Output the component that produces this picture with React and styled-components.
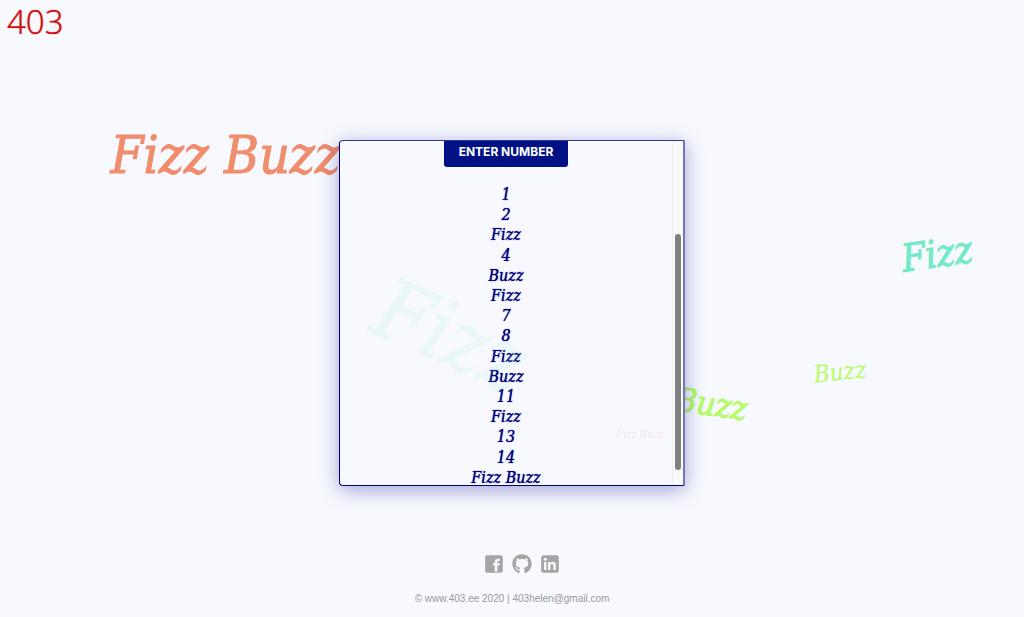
import React from "react";
import styled, { createGlobalStyle } from "styled-components";
import { FaGithub } from "react-icons/fa";

const GlobalStyle = createGlobalStyle`
  * { box-sizing: border-box; }
  body {
    margin: 0;
    background: #f7f9fe;
    font-family: "Liberation Sans", Arial, sans-serif;
  }
`;

const serif = `"DejaVu Serif Condensed", "DejaVu Serif", serif`;

const Page = styled.div`
  position: relative;
  display: flex;
  flex-direction: column;
  min-height: 100vh;
  overflow: hidden;
`;

const Header = styled.header`
  min-height: 72px;
  padding: 0 7px;
`;

const Logo = styled.a`
  color: #d0100f;
  font: 300 33px/44px "Open Sans", "Noto Sans", sans-serif;
  text-decoration: none;
  text-shadow: 0 0 1px #d0100f;
`;

const Main = styled.main`
  flex: 1;
  display: flex;
  align-items: center;
  justify-content: center;
`;

const Word = styled.span`
  position: absolute;
  left: ${(p) => p.$x}%;
  top: ${(p) => p.$y}%;
  z-index: ${(p) => (p.$front ? 2 : 0)};
  color: ${(p) => p.$color};
  opacity: ${(p) => p.$opacity || 1};
  font: italic 400 ${(p) => p.$size}px/1 ${serif};
  -webkit-text-stroke: ${(p) => (p.$size > 30 ? 1 : 0)}px ${(p) => p.$color};
  white-space: nowrap;
  transform: translate(-50%, -50%) rotate(${(p) => p.$turn || 0}deg);
  pointer-events: none;
`;

const Card = styled.section`
  position: relative;
  z-index: 1;
  display: flex;
  width: 346px;
  height: 346px;
  overflow: hidden;
  border: solid;
  border-width: 1px 2px 1px 1px;
  border-color: #33378f #7377b6 #00007c #00007c;
  border-radius: 4px 0 0 4px;
  background: #f7f9fe;
  box-shadow: 0 4px 20px rgba(0, 0, 140, 0.35);
`;

const Content = styled.div`
  flex: 1;
  display: flex;
  flex-direction: column;
  align-items: center;
  gap: 18px;
  margin-top: -4px;
`;

const EnterButton = styled.button`
  flex: none;
  height: 30px;
  padding: 0 15px;
  border: 0;
  border-radius: 3px;
  background: #001185;
  color: #fff;
  font: 700 12px/30px Inter, sans-serif;
  cursor: pointer;
`;

const Results = styled.ol`
  flex: none;
  display: grid;
  grid-auto-rows: 1fr;
  align-items: center;
  height: 303px;
  margin: 0;
  padding: 0;
  list-style: none;
  color: #00007c;
  font: italic 400 16px/20px ${serif};
  text-align: center;
  text-shadow: 0 0 1px #00007c;
`;

const Track = styled.div`
  display: flex;
  flex-direction: column;
  align-items: center;
  width: 11px;
  padding: 93px 0 15px;
  border-left: 1px solid #ededf0;
  background: #fafafa;
`;

const Thumb = styled.div`
  flex: 1;
  width: 6px;
  border-radius: 3px;
  background: #7d7f80;
`;

const Footer = styled.footer`
  display: flex;
  flex-direction: column;
  align-items: center;
  gap: 17px;
  padding-bottom: 10px;
  color: #999;
  font-size: 10px;
  line-height: 16px;
`;

const Social = styled.nav`
  display: flex;
  gap: 8px;
  padding-left: 20px;
`;

const SocialLink = styled.a`
  display: flex;
  color: #a5a5a5;
  font-size: 20px;
`;

const Copyright = styled.p`
  margin: 0;
`;

const MailLink = styled.a`
  color: inherit;
  text-decoration: none;
`;

const FacebookIcon = () => (
  <svg width="20" height="20" viewBox="0 0 20 20" aria-hidden="true">
    <rect x="1.2" y="1.2" width="17.6" height="17.6" rx="2.4" fill="currentColor" />
    <path
      fill="#f7f9fe"
      d="M10.7 17.4v-5.8H8.9V9.3h1.8V7.9c0-2 1.1-3.2 3.1-3.2h2v2.4h-1.3c-.9 0-1.1.4-1.1 1.1v1.1h2.4l-.3 2.3h-2.1v5.8z"
    />
  </svg>
);

const LinkedInIcon = () => (
  <svg width="20" height="20" viewBox="0 0 20 20" aria-hidden="true">
    <rect x="1.2" y="1.2" width="17.6" height="17.6" rx="2.4" fill="currentColor" />
    <circle cx="5.3" cy="5.3" r="1.5" fill="#f7f9fe" />
    <path
      fill="#f7f9fe"
      d="M4.1 8h2.4v8H4.1zM8 8h2.3v1.1c.5-.8 1.4-1.3 2.5-1.3 2.3 0 3 1.4 3 3.6V16h-2.4v-4.1c0-1.1-.2-2-1.4-2s-1.6.9-1.6 2V16H8z"
    />
  </svg>
);

const words = [
  { text: "Fizz Buzz", x: 22, y: 24.9, size: 53, color: "#f08d6d" },
  { text: "Fizz", x: 91.5, y: 41.1, size: 38, color: "#75e9c7", turn: -8 },
  { text: "Buzz", x: 82, y: 60.3, size: 24, color: "#b6fb68", turn: -6 },
  { text: "Buzz", x: 69.4, y: 65.4, size: 33, color: "#b6fb68", turn: 8 },
  { text: "Fizz", x: 44, y: 54.4, size: 84, color: "#75e9c7", turn: 24, opacity: 0.1, front: true },
  { text: "Fizz Buzz", x: 62.5, y: 70.3, size: 11, color: "#ff8d8d", opacity: 0.2, front: true },
];

const answer = (n) =>
  [n % 3 === 0 && "Fizz", n % 5 === 0 && "Buzz"].filter(Boolean).join(" ") || n;

export default function App() {
  return (
    <Page>
      <GlobalStyle />
      <Header>
        <Logo href="#">403</Logo>
      </Header>
      {words.map((w, i) => (
        <Word
          key={i}
          $x={w.x}
          $y={w.y}
          $size={w.size}
          $color={w.color}
          $turn={w.turn}
          $opacity={w.opacity}
          $front={w.front}
        >
          {w.text}
        </Word>
      ))}
      <Main>
        <Card>
          <Content>
            <EnterButton type="button">ENTER NUMBER</EnterButton>
            <Results>
              {Array.from({ length: 15 }, (_, i) => (
                <li key={i}>{answer(i + 1)}</li>
              ))}
            </Results>
          </Content>
          <Track>
            <Thumb />
          </Track>
        </Card>
      </Main>
      <Footer>
        <Social>
          <SocialLink href="#" aria-label="Facebook"><FacebookIcon /></SocialLink>
          <SocialLink href="#" aria-label="GitHub"><FaGithub /></SocialLink>
          <SocialLink href="#" aria-label="LinkedIn"><LinkedInIcon /></SocialLink>
        </Social>
        <Copyright>
          © www.403.ee 2020 | <MailLink href="mailto:403helen@gmail.com">403helen@gmail.com</MailLink>
        </Copyright>
      </Footer>
    </Page>
  );
}
